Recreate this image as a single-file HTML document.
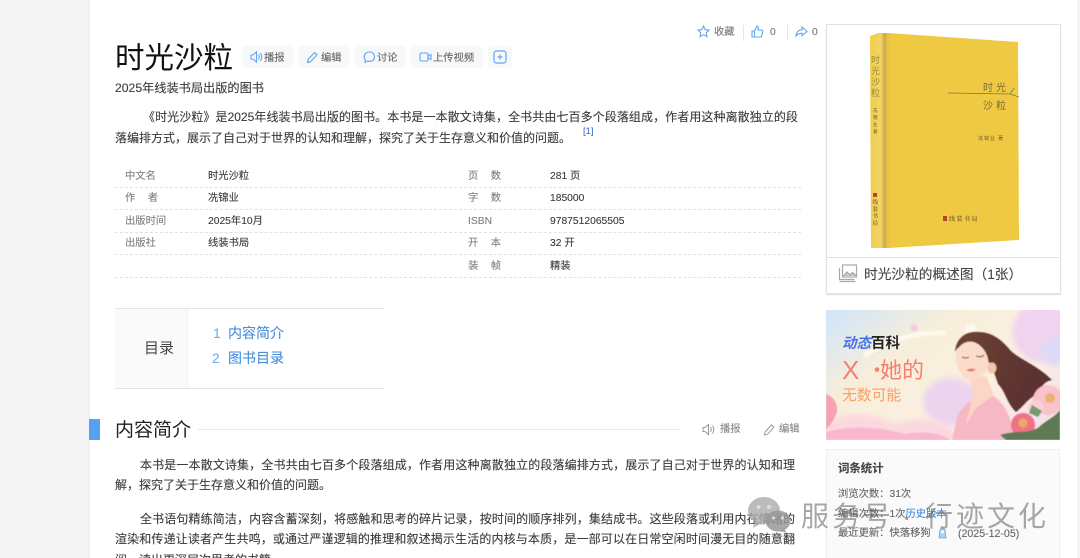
<!DOCTYPE html>
<html lang="zh">
<head>
<meta charset="utf-8">
<title>时光沙粒</title>
<style>
html,body{margin:0;padding:0;background:#fff}
#p{position:relative;width:1080px;height:558px;overflow:hidden;background:#fff;font-family:"Liberation Sans","Noto Sans CJK SC",sans-serif;color:#333;filter:blur(.38px)}
.t{position:absolute;white-space:nowrap;line-height:20px;height:20px;-webkit-text-stroke:.12px currentColor}
.b{font-size:12px;color:#3a3a3a}
.j{text-align:justify;text-align-last:justify;white-space:normal}
.l{font-size:10.3px;color:#808080}
.v{font-size:10.3px;color:#3a3a3a}
.d{position:absolute;left:115px;width:686px;border-top:1px dashed #e2e2e2;height:0}
.btn{position:absolute;top:46px;height:22px;background:#f7f8f9;border-radius:4px}
.btn svg,.ic{position:absolute}
.bt{font-size:10.3px;color:#666}
.x{position:absolute}
</style>
</head>
<body>
<div id="p">
<div class="x" style="left:0;top:0;width:89px;height:558px;background:#f4f4f4"></div>
<div class="x" style="left:89px;top:0;width:1px;height:558px;background:#ececec"></div>
<div class="x" style="left:1077px;top:0;width:3px;height:558px;background:#f4f4f4"></div>

<div class="t" style="left:115px;top:38.500px;font-size:29.5px;line-height:40px;height:40px;color:#111;-webkit-text-stroke:0">时光沙粒</div>

<div class="btn" style="left:242px;width:51px"></div>
<svg class="ic" style="left:250px;top:50px" width="13" height="14" viewBox="0 0 13 14" fill="none" stroke="#62a5f2" stroke-width="1.1"><path d="M1 5h2l3.500-3v10L3 9H1z"/><path d="M8.500 4.500c1 1.300 1 3.700 0 5M10.500 3c1.700 2.300 1.700 5.700 0 8"/></svg>
<div class="t bt" style="left:264px;top:47px;margin-top:1.500px">播报</div>

<div class="btn" style="left:298px;width:51px"></div>
<svg class="ic" style="left:306px;top:50px" width="13" height="14" viewBox="0 0 13 14" fill="none" stroke="#62a5f2" stroke-width="1.1"><path d="M2 9.500 8.500 2.500l2.500 2.200-6.500 7L1.500 12.500z"/></svg>
<div class="t bt" style="left:321px;top:47px;margin-top:1.500px">编辑</div>

<div class="btn" style="left:355px;width:51px"></div>
<svg class="ic" style="left:363px;top:50px" width="13" height="14" viewBox="0 0 13 14" fill="none" stroke="#62a5f2" stroke-width="1.1"><path d="M6.500 2c3 0 5 2 5 4.700s-2 4.700-5 4.700c-.8 0-1.500-.1-2.200-.4L2 12.300l.4-2.500C1.500 9 1.200 7.900 1.200 6.700 1.200 4 3.500 2 6.500 2z"/></svg>
<div class="t bt" style="left:377px;top:47px;margin-top:1.500px">讨论</div>

<div class="btn" style="left:411px;width:72px"></div>
<svg class="ic" style="left:419px;top:50px" width="13" height="14" viewBox="0 0 13 14" fill="none" stroke="#62a5f2" stroke-width="1.1"><rect x="1" y="3" width="8" height="8" rx="1.500"/><path d="M9.500 6l2.500-1.500v5L9.500 8"/></svg>
<div class="t bt" style="left:433px;top:47px;margin-top:1.500px">上传视频</div>

<div class="btn" style="left:488px;width:24px"></div>
<svg class="ic" style="left:493px;top:50px" width="14" height="14" viewBox="0 0 14 14" fill="none" stroke="#62a5f2" stroke-width="1.200"><rect x="1" y="1" width="12" height="12" rx="2.500"/><path d="M4.500 7h5M7 4.500v5"/></svg>

<div class="t" style="left:115px;top:78px;font-size:12.200px;color:#3a3a3a">2025年线装书局出版的图书</div>

<svg class="ic" style="left:697px;top:25px" width="13" height="13" viewBox="0 0 13 13" fill="none" stroke="#62a5f2" stroke-width="1.100"><path d="M6.500 1l1.700 3.600 3.900.5-2.900 2.700.8 3.900-3.500-2-3.500 2 .8-3.900L.9 5.100l3.900-.5z"/></svg>
<div class="t" style="left:714px;top:22.500px;font-size:10.300px;color:#777">收藏</div>
<div class="x" style="left:743px;top:25px;width:1px;height:16px;background:#e6e6e6"></div>
<svg class="ic" style="left:751px;top:25px" width="13" height="13" viewBox="0 0 13 13" fill="none" stroke="#62a5f2" stroke-width="1.100"><path d="M1 6h2.500v6H1zM3.500 6 6 1.200c1 0 1.500.8 1.300 1.800L7 5h3.800c.7 0 1.200.6 1 1.300l-1.200 4.800c-.1.500-.6.900-1.100.9H3.500"/></svg>
<div class="t" style="left:770px;top:22.500px;font-size:10.300px;color:#777">0</div>
<div class="x" style="left:787px;top:25px;width:1px;height:16px;background:#e6e6e6"></div>
<svg class="ic" style="left:795px;top:25px" width="13" height="13" viewBox="0 0 13 13" fill="none" stroke="#62a5f2" stroke-width="1.100"><path d="M7 2l5 4.500-5 4V8.300C4.500 8.300 2.500 9.200 1 11c.3-3.500 2.500-6 6-6.300z"/></svg>
<div class="t" style="left:812px;top:22.500px;font-size:10.300px;color:#777">0</div>

<div class="t b j" style="left:143px;top:107px;width:655px">《时光沙粒》是2025年线装书局出版的图书。本书是一本散文诗集，全书共由七百多个段落组成，作者用这种离散独立的段</div>
<div class="t b" style="left:115px;top:128px">落编排方式，展示了自己对于世界的认知和理解，探究了关于生存意义和价值的问题。</div>
<div class="t" style="left:583px;top:122px;font-size:9.500px;color:#3a6fd0">[1]</div>

<div class="t l" style="left:125px;top:167px">中文名</div><div class="t v" style="left:208px;top:167px">时光沙粒</div>
<div class="t l j" style="left:125px;top:189px;width:33px">作者</div><div class="t v" style="left:208px;top:189px">冼锦业</div>
<div class="t l" style="left:125px;top:212px">出版时间</div><div class="t v" style="left:208px;top:212px">2025年10月</div>
<div class="t l" style="left:125px;top:234px">出版社</div><div class="t v" style="left:208px;top:234px">线装书局</div>

<div class="t l j" style="left:468px;top:167px;width:33px">页数</div><div class="t v" style="left:550px;top:167px">281 页</div>
<div class="t l j" style="left:468px;top:189px;width:33px">字数</div><div class="t v" style="left:550px;top:189px">185000</div>
<div class="t l" style="left:468px;top:212px">ISBN</div><div class="t v" style="left:550px;top:212px">9787512065505</div>
<div class="t l j" style="left:468px;top:234px;width:33px">开本</div><div class="t v" style="left:550px;top:234px">32 开</div>
<div class="t l j" style="left:468px;top:256.500px;width:33px">装帧</div><div class="t v" style="left:550px;top:256.500px">精装</div>

<div class="d" style="top:187px"></div>
<div class="d" style="top:209px"></div>
<div class="d" style="top:232px"></div>
<div class="d" style="top:254px"></div>
<div class="d" style="top:277px"></div>

<div class="x" style="left:115px;top:308px;width:72px;height:80px;background:#fafafa;border-right:1px solid #f0f0f0"></div>
<div class="x" style="left:115px;top:308px;width:269px;height:1px;background:#e3e3e3"></div>
<div class="x" style="left:115px;top:388px;width:269px;height:1px;background:#e3e3e3"></div>
<div class="t" style="left:144px;top:339px;font-size:15px;color:#444;-webkit-text-stroke:0">目录</div>
<div class="t" style="left:213px;top:323px;font-size:14px;color:#7aaeea">1</div>
<div class="t" style="left:228px;top:323px;font-size:14px;color:#4a8ede">内容简介</div>
<div class="t" style="left:212px;top:348px;font-size:14px;color:#7aaeea">2</div>
<div class="t" style="left:228px;top:348px;font-size:14px;color:#4a8ede">图书目录</div>

<div class="x" style="left:89px;top:419px;width:11px;height:21px;background:#55a0f3"></div>
<div class="t" style="left:115px;top:416px;font-size:19px;line-height:30px;height:30px;color:#222;-webkit-text-stroke:0">内容简介</div>
<div class="x" style="left:198px;top:429px;width:483px;height:1px;background:#e8e8e8"></div>
<svg class="ic" style="left:702px;top:423px" width="13" height="13" viewBox="0 0 13 13" fill="none" stroke="#999" stroke-width="1"><path d="M1 4.500h2l3.500-3v10L3 8.500H1z"/><path d="M8.500 4c1 1.300 1 3.700 0 5M10.500 2.500c1.700 2.300 1.700 5.700 0 8"/></svg>
<div class="t" style="left:720px;top:420px;font-size:10.300px;color:#888">播报</div>
<svg class="ic" style="left:763px;top:423px" width="13" height="13" viewBox="0 0 13 13" fill="none" stroke="#999" stroke-width="1"><path d="M2 9 8.500 2l2.500 2.200-6.500 7L1.500 12z"/></svg>
<div class="t" style="left:779px;top:420px;font-size:10.300px;color:#888">编辑</div>

<div class="t b j" style="left:140px;top:455px;width:655px">本书是一本散文诗集，全书共由七百多个段落组成，作者用这种离散独立的段落编排方式，展示了自己对于世界的认知和理</div>
<div class="t b" style="left:115px;top:475px">解，探究了关于生存意义和价值的问题。</div>
<div class="t b j" style="left:140px;top:509px;width:655px">全书语句精练简洁，内容含蓄深刻，将感触和思考的碎片记录，按时间的顺序排列，集结成书。这些段落或利用内在情绪的</div>
<div class="t b j" style="left:115px;top:529px;width:680px">渲染和传递让读者产生共鸣，或通过严谨逻辑的推理和叙述揭示生活的内核与本质，是一部可以在日常空闲时间漫无目的随意翻</div>
<div class="t b" style="left:115px;top:550px">阅，读出更深层次思考的书籍。</div>

<!-- image card -->
<div class="x" style="left:826px;top:24px;width:233px;height:268px;background:#fff;border:1px solid #e3e3e3;box-shadow:0 1px 1px #ddd"></div>
<svg class="ic" style="left:826px;top:24px" width="234" height="234" viewBox="826 24 234 234">
<defs><linearGradient id="sp" x1="0" x2="1" y1="0" y2="0"><stop offset="0" stop-color="#f0cd4e"/><stop offset=".55" stop-color="#f3d565"/><stop offset=".72" stop-color="#c9a94c"/><stop offset=".85" stop-color="#e3bf4a"/><stop offset="1" stop-color="#f0c943"/></linearGradient></defs>
<polygon points="888,33 1018,42 1019,240 888,248" fill="#f0c943"/>
<polygon points="870,36 878,33 890,33 890,248 881,248 871,248" fill="url(#sp)"/>
<path d="M948 93 L1010 94 L1019 97 M1010 94 L1014 88" fill="none" stroke="#7d7a3c" stroke-width=".8"/>
<text x="983" y="91" font-size="10" letter-spacing="3" fill="#7a6d35" font-family="Noto Sans CJK SC">时光</text>
<text x="983" y="109" font-size="10" letter-spacing="3" fill="#7a6d35" font-family="Noto Sans CJK SC">沙粒</text>
<text x="978" y="140" font-size="5" letter-spacing="1" fill="#6b5a25" font-family="Noto Sans CJK SC">冼锦业 著</text>
<rect x="943" y="216" width="4" height="5" fill="#b5472c"/>
<text x="949" y="221" font-size="6" letter-spacing="1.500" fill="#4d3b1a" font-family="Noto Serif CJK SC">线装书局</text>
<text font-size="9" fill="#9b8a3d" font-family="Noto Sans CJK SC"><tspan x="871" y="63">时</tspan><tspan x="871" y="74">光</tspan><tspan x="871" y="85">沙</tspan><tspan x="871" y="96">粒</tspan></text>
<text font-size="4.500" fill="#6b5a25" font-family="Noto Sans CJK SC"><tspan x="873" y="112">冼</tspan><tspan x="873" y="119">锦</tspan><tspan x="873" y="126">业</tspan><tspan x="873" y="133">著</tspan></text>
<rect x="873" y="193" width="4" height="4" fill="#b5472c"/>
<text font-size="5.500" fill="#4d3b1a" font-family="Noto Serif CJK SC"><tspan x="872.500" y="204">线</tspan><tspan x="872.500" y="211">装</tspan><tspan x="872.500" y="218">书</tspan><tspan x="872.500" y="225">局</tspan></text>
</svg>
<div class="x" style="left:827px;top:257px;width:232px;height:1px;background:#e3e3e3"></div>
<svg class="ic" style="left:838px;top:264px" width="20" height="19" viewBox="0 0 20 19" fill="none" stroke="#a8a8a8" stroke-width="1.200"><rect x="4.500" y="1" width="14" height="12"/><path d="M5 12l4-4 3 3 2.500-2.500 4 3.500" fill="#c8c8c8"/><path d="M1.500 4v11.500h15M1.500 17.500h16"/></svg>
<div class="t" style="left:864px;top:265px;font-size:13.700px;color:#444">时光沙粒的概述图（1张）</div>

<!-- banner -->
<svg class="ic" style="left:826px;top:310px" width="234" height="130" viewBox="0 0 234 130">
<defs>
<linearGradient id="bg" x1="0" y1="0" x2="1" y2=".8"><stop offset="0" stop-color="#cfe5fb"/><stop offset=".35" stop-color="#f7eeda"/><stop offset=".7" stop-color="#fbf0e0"/><stop offset="1" stop-color="#f5e0ea"/></linearGradient>
<linearGradient id="hr" x1="0" x2="1" y1="0" y2=".3"><stop offset="0" stop-color="#6d4334"/><stop offset="1" stop-color="#5a3030"/></linearGradient>
<filter id="bl"><feGaussianBlur stdDeviation="3"/></filter>
<filter id="b2"><feGaussianBlur stdDeviation=".5"/></filter>
</defs>
<rect width="234" height="130" fill="url(#bg)"/>
<ellipse cx="215" cy="22" rx="28" ry="30" fill="#f0d3ef" filter="url(#bl)"/>
<ellipse cx="228" cy="42" rx="12" ry="14" fill="#dcdaf8" filter="url(#bl)"/>
<ellipse cx="125" cy="92" rx="28" ry="24" fill="#ecd4ee" filter="url(#bl)"/>
<path d="M38 46C68 26 98 22 120 23" fill="none" stroke="#fdf8ea" stroke-width="5" filter="url(#b2)"/>
<circle cx="88" cy="18" r="3.500" fill="#f6c9e3" filter="url(#b2)"/>
<circle cx="145" cy="20" r="6" fill="#fff8ee" filter="url(#b2)"/>
<path d="M0 130V112C25 100 50 104 70 114 100 104 120 110 135 130Z" fill="#fbd8de" filter="url(#bl)"/>
<path d="M0 130V122C30 114 55 118 80 124 100 120 115 124 125 130Z" fill="#f8b2ca" filter="url(#b2)" opacity=".85"/>
<path d="M0 84C8 87 12 94 11 102 8 110 4 116 0 119Z" fill="#f6a1b6" filter="url(#b2)"/>
<g filter="url(#b2)">
<path d="M126 130 132 104 141 93 167 86C178 92 186 108 189 130Z" fill="#f7b8c6"/>
<path d="M144 70 147 87 139 116 150 98 168 85 160 66Z" fill="#fbd6c6"/>
<path d="M129 42C130 28 140 21 152 22 166 22 176 30 184 40 194 50 210 54 226 70 216 72 216 78 212 84 202 88 198 96 190 102 180 92 180 82 172 74 168 60 160 42 146 36 138 34 132 36 129 42Z" fill="url(#hr)"/>
<path d="M130 44C132 34 142 29 150 33 160 38 164 50 162 58 158 66 150 72 144 71 138 69 134 62 132 58 130 52 129 48 130 44Z" fill="#fbdccb"/>
<path d="M136 47q4 2 7 0M150 46q5 2 8 -1" stroke="#6a4034" stroke-width="1" fill="none"/>
<path d="M140 60q5 3 10 -.5q-5 -2 -10 .5Z" fill="#e8705f"/>
<ellipse cx="166" cy="58" rx="4.500" ry="5.500" fill="#f4c5ac"/>
<circle cx="222" cy="90" r="15" fill="#fac2ca"/><circle cx="210" cy="98" r="8" fill="#f9d0d3"/><circle cx="224" cy="88" r="5" fill="#eeb06a"/>
<circle cx="197" cy="115" r="12" fill="#ee7385"/><circle cx="197" cy="113" r="4.500" fill="#f0a868"/>
<path d="M174 125C190 120 200 124 212 118 220 110 228 108 234 100V130H180Z" fill="#5d7a55"/>
<path d="M206 95l10 6-4 6-9-4Z" fill="#789a6a"/>
</g>
<text x="16" y="38" font-size="14.500" font-weight="bold" font-style="italic" fill="#4a72e8" font-family="Noto Sans CJK SC">动态<tspan fill="#222" font-style="normal">百科</tspan></text>
<text x="16" y="69" font-size="26" fill="#f77f70" font-family="Liberation Sans">X</text>
<text x="40" y="68" font-size="22" fill="#f77f70" font-family="Noto Sans CJK SC">·</text>
<text x="54" y="68" font-size="22" fill="#f77f70" font-family="Noto Sans CJK SC">她的</text>
<text x="16" y="90" font-size="14.800" fill="#f8a06a" font-family="Noto Sans CJK SC">无数可能</text>
</svg>

<!-- stats -->
<div class="x" style="left:826px;top:449px;width:232px;height:120px;background:#fafafa;border:1px solid #eee"></div>
<div class="t" style="left:838px;top:459px;font-size:11.400px;font-weight:bold;color:#444">词条统计</div>
<div class="t" style="left:838px;top:485px;font-size:10.300px;color:#666">浏览次数：31次</div>
<div class="t" style="left:838px;top:504.500px;font-size:10.300px;color:#666">编辑次数：1次<span style="color:#3f87dc">历史版本</span></div>
<div class="t" style="left:838px;top:524px;font-size:10.300px;color:#666">最近更新：快落移狗</div>
<svg class="ic" style="left:937px;top:526px" width="11" height="14" viewBox="0 0 11 14"><path d="M2 12 3 4q2.500-4 5 0l1 8Z" fill="#a8d4f0" stroke="#5fa9dd" stroke-width=".8"/><circle cx="5.500" cy="6" r="1.500" fill="#fff"/></svg>
<div class="t" style="left:958px;top:524px;font-size:10.600px;color:#666">(2025-12-05)</div>

<!-- watermark -->
<svg class="ic" style="left:748px;top:497px" width="43" height="36" viewBox="0 0 43 36"><ellipse cx="16" cy="13.500" rx="16" ry="13.500" fill="#aaa" opacity=".8"/><path d="M7 23 5 31l9-5Z" fill="#aaa" opacity=".8"/><ellipse cx="30" cy="24" rx="12.500" ry="10.500" fill="#999" opacity=".85"/><path d="M36 32l3 4-8-2Z" fill="#999" opacity=".85"/><circle cx="10.500" cy="10" r="2" fill="#ddd"/><circle cx="21" cy="10" r="2" fill="#ddd"/><circle cx="25.500" cy="21" r="1.500" fill="#ddd"/><circle cx="34.500" cy="21" r="1.500" fill="#ddd"/></svg>
<div class="t" style="left:801px;top:492px;font-size:28px;line-height:50px;height:50px;letter-spacing:3px;color:rgba(95,95,95,.55);-webkit-text-stroke:0">服务号</div>
<div class="t" style="left:902px;top:492px;font-size:28px;line-height:50px;height:50px;color:rgba(95,95,95,.55);-webkit-text-stroke:0">·</div>
<div class="t" style="left:925px;top:492px;font-size:28px;line-height:50px;height:50px;letter-spacing:3px;color:rgba(95,95,95,.55);-webkit-text-stroke:0">行迹文化</div>
</div>
</body>
</html>
